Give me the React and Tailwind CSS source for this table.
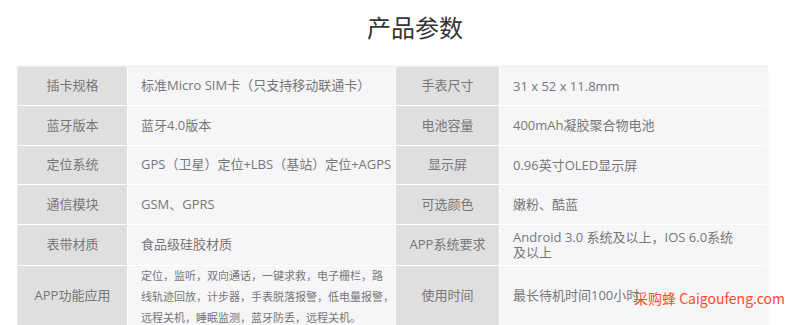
const rows = [
    ["插卡规格", "标准Micro SIM卡（只支持移动联通卡）", "手表尺寸", "31 x 52 x 11.8mm"],
    ["蓝牙版本", "蓝牙4.0版本", "电池容量", "400mAh凝胶聚合物电池"],
    ["定位系统", "GPS（卫星）定位+LBS（基站）定位+AGPS", "显示屏", "0.96英寸OLED显示屏"],
    ["通信模块", "GSM、GPRS", "可选颜色", "嫩粉、酷蓝"],
    ["表带材质", "食品级硅胶材质", "APP系统要求", "Android 3.0 系统及以上，IOS 6.0系统及以上"]
];

const heights = ["h-[38px]", "h-[39px]", "h-[38px]", "h-[39px]", "h-[40px]"];

const functionLines = [
    "定位，监听，双向通话，一键求救，电子栅栏，路",
    "线轨迹回放，计步器，手表脱落报警，低电量报警，",
    "远程关机，睡眠监测，蓝牙防丢，远程关机。"
];

const App = () => {
    return (
        <div className="relative h-[325px] w-[792px] overflow-hidden bg-white font-['Open_Sans','Noto_Sans_CJK_SC',sans-serif]">
            <h1 className="pl-[38px] pt-[11px] text-center text-[24px] leading-[32px] text-[#333] font-['Noto_Sans_CJK_SC',sans-serif]">
                产品参数
            </h1>

            <div className="ml-[17px] mt-[23px] w-[751px] border border-[#ececec] shadow-[0_0_2px_rgba(0,0,0,0.06)]">
                <div className="grid grid-cols-[109px_267px_103px_268px] gap-px bg-white text-[13px] text-[#777]">
                    {rows.map((row, i) => (
                        <div key={i} className="contents">
                            <div className={`${heights[i]} flex items-center justify-center bg-[#dfdfdf]`}>
                                {row[0]}
                            </div>
                            <div className="flex items-center whitespace-nowrap bg-[#f6f6f8] pl-[13px]">
                                {row[1]}
                            </div>
                            <div className="flex items-center justify-center bg-[#dfdfdf]">
                                {row[2]}
                            </div>
                            <div className="flex items-center bg-[#f6f6f8] pl-[13px]">
                                <span className="w-[222px] leading-[15px]">{row[3]}</span>
                            </div>
                        </div>
                    ))}

                    <div className="flex h-[60px] items-center justify-center bg-[#dfdfdf]">
                        APP功能应用
                    </div>
                    <div className="flex h-[60px] flex-col justify-center bg-[#f6f6f8] pl-[13px] text-[11px] leading-[21px]">
                        {functionLines.map((line) => (
                            <span key={line} className="whitespace-nowrap">
                                {line}
                            </span>
                        ))}
                    </div>
                    <div className="flex items-center justify-center bg-[#dfdfdf]">
                        使用时间
                    </div>
                    <div className="flex items-center bg-[#f6f6f8] pl-[13px]">
                        最长待机时间100小时
                    </div>
                </div>
            </div>

            <div className="absolute left-[634px] top-[288px] whitespace-nowrap text-[14px] leading-[20px] text-[#ff4a26] font-['Noto_Sans_CJK_SC',sans-serif]">
                采购蜂 Caigoufeng.com
            </div>
        </div>
    );
};

export default App;
